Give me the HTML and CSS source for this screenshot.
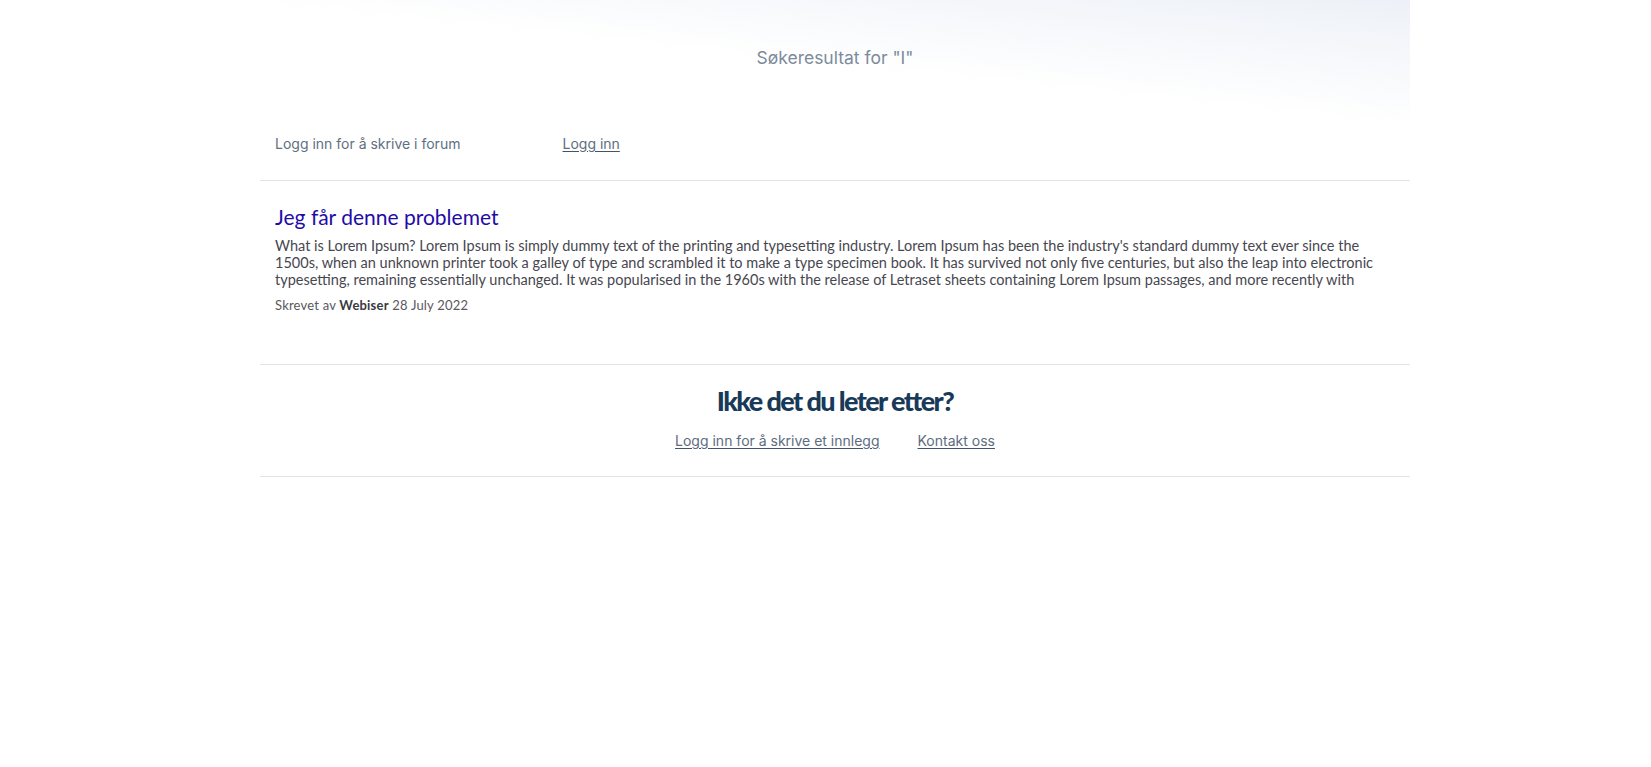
FILE: index.html
```html
<!DOCTYPE html>
<html lang="no">
<head>
<meta charset="utf-8">
<title>Søkeresultat</title>
<link rel="stylesheet" href="styles.css">
</head>
<body>
<div class="page">
  <header class="hero">
    <h1 class="hero-title">Søkeresultat for "I"</h1>
  </header>

  <div class="login-row">
    <div class="col">Logg inn for å skrive i forum</div>
    <div class="col"><a href="#" class="link">Logg inn</a></div>
  </div>

  <section class="results">
    <article class="post">
      <a href="#" class="post-title">Jeg får denne problemet</a>
      <p class="post-excerpt">What is Lorem Ipsum? Lorem Ipsum is simply dummy text of the printing and typesetting industry. Lorem Ipsum has been the industry's standard dummy text ever since the 1500s, when an unknown printer took a galley of type and scrambled it to make a type specimen book. It has survived not only five centuries, but also the leap into electronic typesetting, remaining essentially unchanged. It was popularised in the 1960s with the release of Letraset sheets containing Lorem Ipsum passages, and more recently with desktop publishing software like Aldus PageMaker including versions of Lorem Ipsum.</p>
      <div class="post-meta">Skrevet av <strong>Webiser</strong> 28 July 2022</div>
    </article>
  </section>

  <section class="not-found">
    <h2 class="nf-title">Ikke det du leter etter?</h2>
    <div class="nf-links">
      <a href="#" class="link">Logg inn for å skrive et innlegg</a>
      <a href="#" class="link">Kontakt oss</a>
    </div>
  </section>
</div>
</body>
</html>
```

FILE: styles.css
```css
html, body {
  margin: 0;
  padding: 0;
  background: #ffffff;
}

body {
  padding-left: 19px;
  font-family: Inter, "Noto Sans", sans-serif;
}

.page {
  width: 1150px;
  margin: 0 auto;
}

.hero {
  height: 122px;
  box-sizing: border-box;
  padding-top: 47px;
  background: linear-gradient(to bottom left, #edf1f7 0%, #ffffff 52%);
}

.hero-title {
  margin: 0;
  text-align: center;
  font-weight: 400;
  font-size: 17.5px;
  line-height: 22px;
  color: #7c8b9b;
}

.login-row {
  display: grid;
  grid-template-columns: 25% 25%;
  padding: 12px 0 26px;
  border-bottom: 1px solid #e4e4e4;
  font-size: 14px;
  line-height: 20px;
  color: #607082;
}

.col {
  padding: 0 15px;
}

.link {
  color: #5d6d80;
  text-decoration: underline;
  text-decoration-color: #42546a;
  text-underline-offset: 2px;
}

.results {
  border-bottom: 1px solid #e4e4e4;
}

.post {
  padding: 23px 15px 50px;
  font-family: Lato, "Noto Sans", sans-serif;
}

.post-title {
  display: block;
  font-size: 21px;
  line-height: 26px;
  color: #1f0ca8;
  text-decoration: none;
}

.post-excerpt {
  margin: 7px 0 0;
  font-size: 14.5px;
  line-height: 17px;
  max-height: 51px;
  overflow: hidden;
  color: #47474f;
}

.post-meta {
  margin-top: 8px;
  font-size: 13px;
  line-height: 18px;
  color: #58585e;
  letter-spacing: 0.2px;
}

.post-meta strong {
  color: #3a3a40;
}

.not-found {
  padding: 19px 0 25px;
  border-bottom: 1px solid #e4e4e4;
  text-align: center;
}

.nf-title {
  margin: 0;
  font-family: Lato, "Noto Sans", sans-serif;
  font-weight: 900;
  font-size: 27px;
  line-height: 34px;
  letter-spacing: -1.6px;
  color: #183a58;
}

.nf-links {
  margin-top: 13px;
  display: flex;
  justify-content: center;
  gap: 38px;
  font-size: 14px;
  line-height: 20px;
}
```
